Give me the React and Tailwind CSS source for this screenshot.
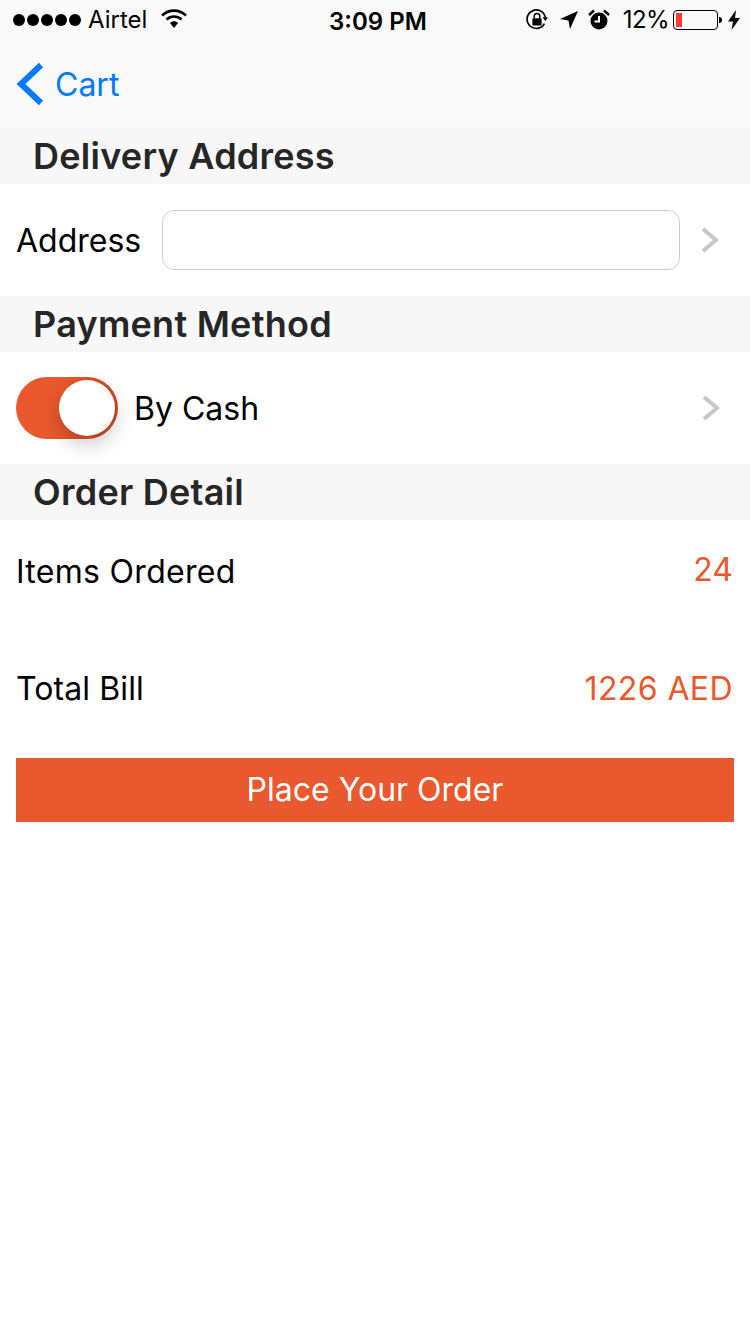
const font = { fontFamily: 'Inter, "Noto Sans", sans-serif' };

function SectionHeader({ title }) {
  return (
    <div className="flex h-14 items-center bg-[#f7f7f7] pl-[33px] text-[36px] font-semibold tracking-[0.25px] text-[#262626]">
      {title}
    </div>
  );
}

function Chevron() {
  return (
    <svg width="20" height="28" viewBox="0 0 20 28" fill="none" className="shrink-0">
      <path d="M2 3 L15 14 L2 25" stroke="#c7c7cc" strokeWidth="4" />
    </svg>
  );
}

function StatusBar() {
  return (
    <div className="relative flex h-10 items-center justify-between pl-[13px] pr-[9px] text-[24px] text-black">
      <div className="flex items-center">
        <div className="flex gap-[2px]">
          {[0, 1, 2, 3, 4].map((i) => (
            <span key={i} className="h-[12px] w-[12px] rounded-full bg-black" />
          ))}
        </div>
        <span className="ml-[7px] text-[24px] leading-none">Airtel</span>
        <svg width="26" height="20" viewBox="0 0 26 20" className="ml-[14px] mb-[2px]">
          <path d="M1 6.5 C8 0 18 0 25 6.5" fill="none" stroke="#000" strokeWidth="2.6" />
          <path d="M5.5 10.5 C10 6.5 16 6.5 20.5 10.5" fill="none" stroke="#000" strokeWidth="2.6" />
          <path d="M9 14 C11.5 11.5 14.5 11.5 17 14 L13 19 Z" fill="#000" />
        </svg>
      </div>
      <span className="absolute left-[329px] top-[10px] text-[24px] font-semibold leading-none">3:09 PM</span>
      <div className="flex items-center">
        <svg width="24" height="24" viewBox="0 0 26 26">
          <path d="M21 17 A10 10 0 1 1 22 10" fill="none" stroke="#000" strokeWidth="1.8" />
          <path d="M19 10 L25 10 L22 14 Z" fill="#000" />
          <rect x="8" y="11" width="10" height="8" rx="1" fill="#000" />
          <path d="M10 11 V9 A3 3 0 0 1 16 9 V11" fill="none" stroke="#000" strokeWidth="1.6" />
        </svg>
        <svg width="20" height="20" viewBox="0 0 20 20" className="ml-[10px]">
          <path d="M19 1 L11 19 L9.5 10.5 L1 9 Z" fill="#000" />
        </svg>
        <svg width="22" height="22" viewBox="0 0 22 22" className="ml-[9px]">
          <circle cx="11" cy="12" r="8.5" fill="#000" />
          <path d="M11 7 V12.5 H6.5" fill="none" stroke="#fff" strokeWidth="2" />
          <path d="M1 6 L6 1.5 M21 6 L16 1.5" stroke="#000" strokeWidth="2.4" />
        </svg>
        <span className="ml-[13px] tracking-[-0.6px] leading-none">12%</span>
        <div className="ml-[4px] flex h-[20px] w-[45px] items-center rounded-[4px] border border-black p-[2px]">
          <div className="h-full w-[6px] bg-[#ff3b30]" />
        </div>
        <div className="ml-[1px] h-[6px] w-[3px] rounded-r-full bg-black" />
        <svg width="14" height="20" viewBox="0 0 14 20" className="ml-[5px]">
          <path d="M9 0 L1 11.5 H6 L4.5 20 L13 8 H8 Z" fill="#000" />
        </svg>
      </div>
    </div>
  );
}

export default function App() {
  return (
    <div className="relative min-h-[1334px] w-[750px] bg-white" style={font}>
      <div className="bg-[#f9f9f9]">
        <StatusBar />
        <div className="flex h-[88px] items-center pl-[16px]">
          <svg width="28" height="44" viewBox="0 0 28 44" fill="none">
            <path d="M25 3 L5 22 L25 41" stroke="#007aff" strokeWidth="6" />
          </svg>
          <span className="ml-[11px] mt-[1px] text-[32px] text-[#007aff]">Cart</span>
        </div>
      </div>

      <SectionHeader title="Delivery Address" />
      <div className="flex h-28 items-center pl-[16px] pr-[28px]">
        <span className="mt-[2px] w-[146px] text-[32px] text-black">Address</span>
        <div className="h-[60px] w-[518px] rounded-[12px] border border-[#cccccc] bg-white" />
        <div className="ml-[21px]"><Chevron /></div>
      </div>

      <SectionHeader title="Payment Method" />
      <div className="flex h-28 items-center pl-[16px] pr-[28px]">
        <div className="relative h-[62px] w-[102px] rounded-full bg-gradient-to-r from-[#ea582d] from-50% to-[#d04a24]">
          <div className="absolute right-[3px] top-[3px] h-[56px] w-[56px] rounded-full bg-white shadow-[0_8px_20px_rgba(0,0,0,0.22)]" />
        </div>
        <span className="ml-[16px] mt-[2px] flex-1 text-[32px] text-black">By Cash</span>
        <Chevron />
      </div>

      <SectionHeader title="Order Detail" />
      <div className="flex h-[102px] items-center justify-between pl-[16px] pr-[17px]">
        <span className="mt-[2px] text-[32px] tracking-[0.3px] text-black">Items Ordered</span>
        <span className="mb-[2px] text-[32px] text-[#ea582d]">24</span>
      </div>
      <div className="mt-[16px] flex h-[102px] items-center justify-between pl-[16px] pr-[17px]">
        <span className="text-[32px] tracking-[0.1px] text-black">Total Bill</span>
        <span className="text-[32px] tracking-[0.4px] text-[#ea582d]">1226 AED</span>
      </div>

      <div className="mx-[16px] mt-[18px] flex h-[64px] items-center justify-center bg-[#ea582d] text-[32px] text-white">
        Place Your Order
      </div>
    </div>
  );
}
